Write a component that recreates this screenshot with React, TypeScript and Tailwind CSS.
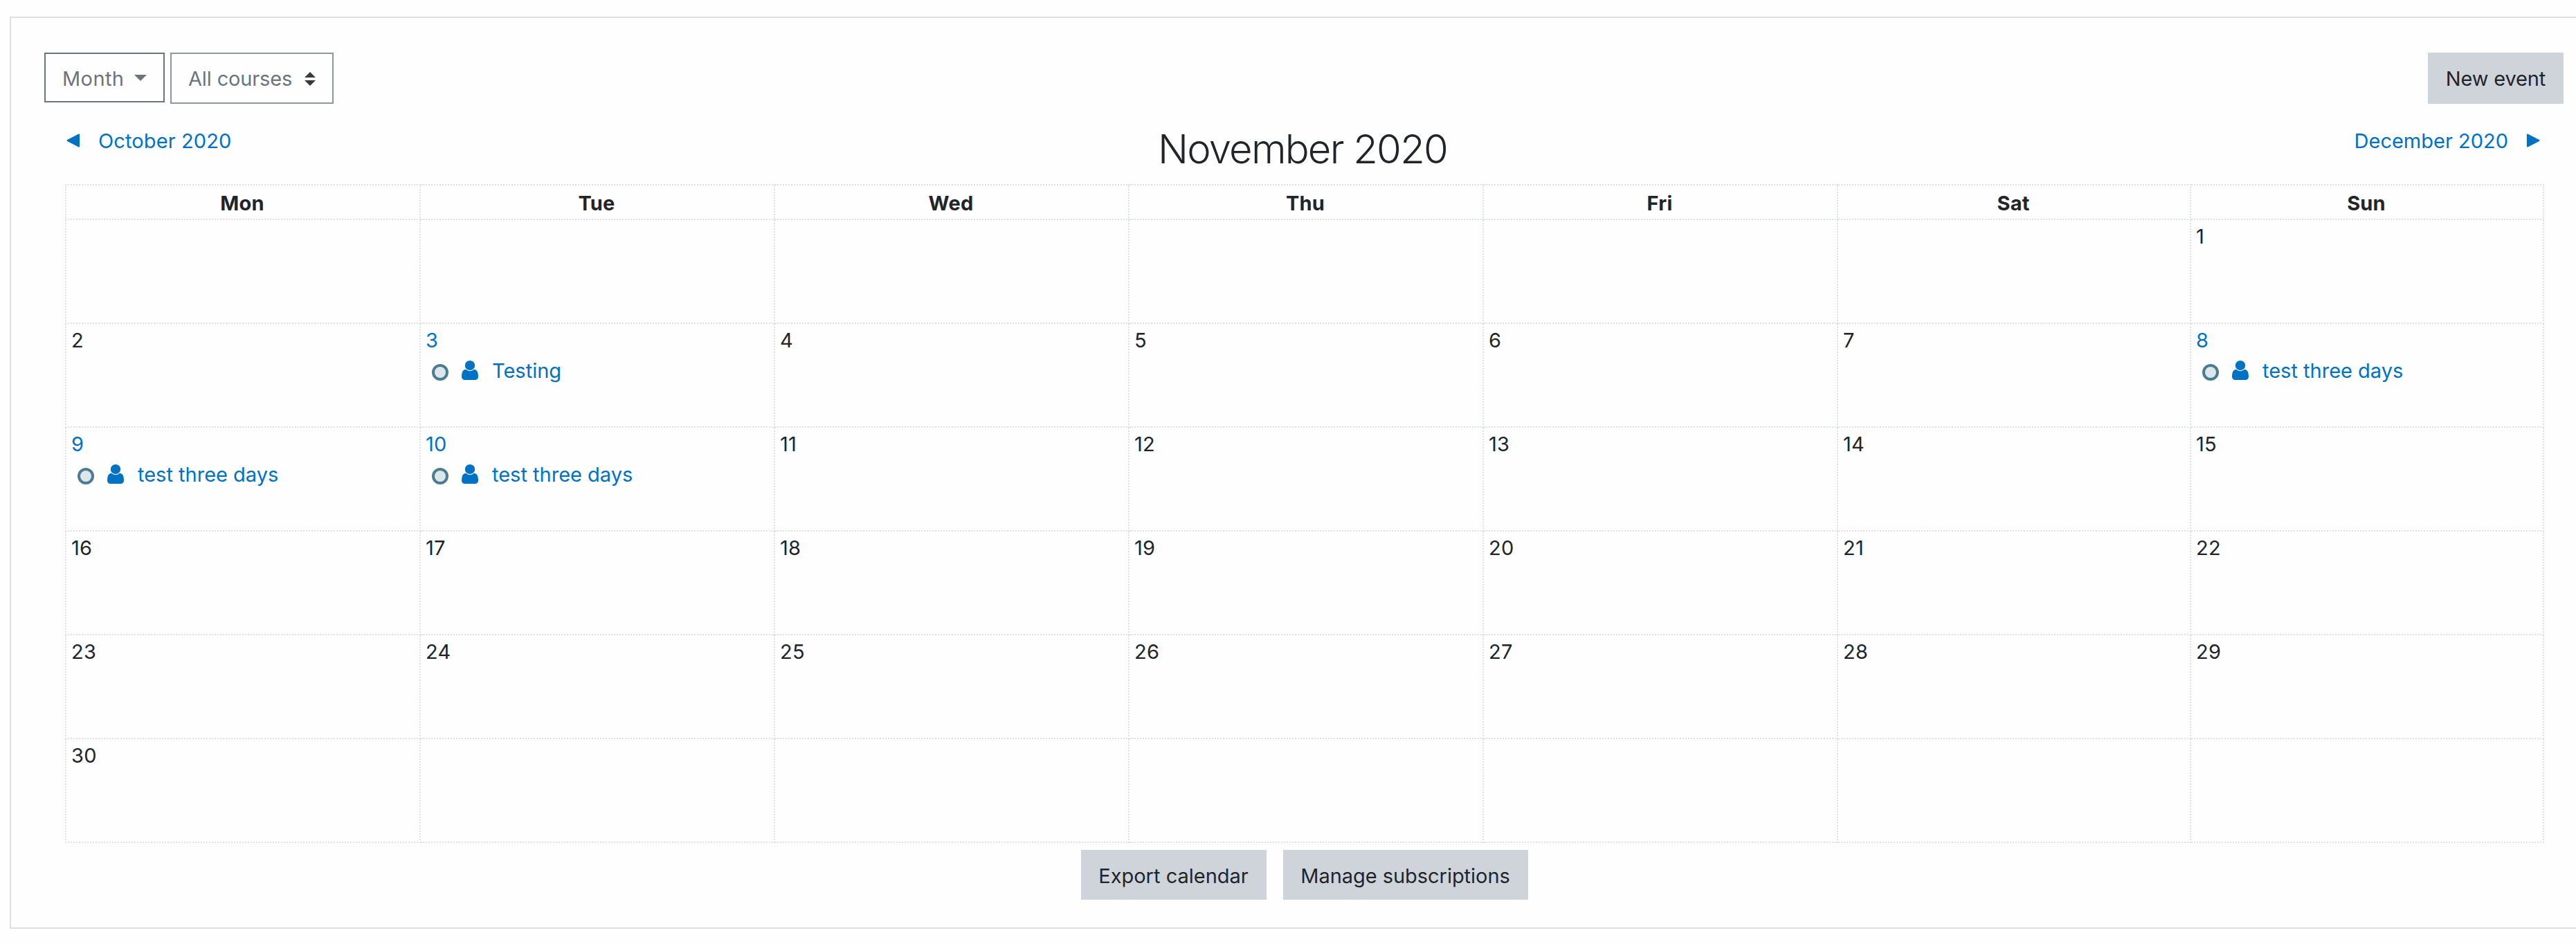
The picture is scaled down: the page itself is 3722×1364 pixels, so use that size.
type Day = { n?: number; event?: string };

const events: Record<number, string> = {
  3: "Testing",
  8: "test three days",
  9: "test three days",
  10: "test three days",
};

const weekdays = ["Mon", "Tue", "Wed", "Thu", "Fri", "Sat", "Sun"];

/* November 2020 starts on a Sunday, so the first row has six blank cells. */
const weeks: Day[][] = Array.from({ length: 6 }, (_, w) =>
  Array.from({ length: 7 }, (_, d) => {
    const n = w * 7 + d - 5;
    return n >= 1 && n <= 30 ? { n, event: events[n] } : {};
  }),
);

function UserIcon() {
  return (
    <svg className="mt-[3px] ml-[19px] h-[28px] w-[24px] shrink-0" viewBox="0 0 1280 1536" preserveAspectRatio="none" fill="currentColor">
      <path
        transform="matrix(1 0 0 -1 0 1408)"
        d="M1280 137q0 -109 -62.5 -187t-150.5 -78h-854q-88 0 -150.5 78t-62.5 187q0 85 8.5 160.5t31.5 152t58.5 131t94 89t134.5 34.5q131 -128 313 -128t313 128q76 0 134.5 -34.5t94 -89t58.5 -131t31.5 -152t8.5 -160.5zM1024 1024q0 -159 -112.5 -271.5t-271.5 -112.5t-271.5 112.5t-112.5 271.5t112.5 271.5t271.5 112.5t271.5 -112.5t112.5 -271.5z"
      />
    </svg>
  );
}

function Arrow({ className }: { className: string }) {
  return (
    <svg className={className} viewBox="0 0 20 20" fill="currentColor" stroke="currentColor" strokeWidth="2" strokeLinejoin="round">
      <path d="M1.9 1.5 V18.5 L18.4 10 Z" />
    </svg>
  );
}

function DayCell({ n, event }: Day) {
  return (
    <td className="border-2 border-dotted border-[#dee2e6] p-0 align-top">
      {n !== undefined && (
        <div className={event ? "pt-[6px] pl-[7px] text-[#0072c3]" : "pt-[6px] pl-[7px]"}>
          <div className="tracking-[0.3px]">{n}</div>
          {event && (
            <a className="mt-[9px] flex items-start pl-[9px]">
              <span className="mt-[8px] size-[24px] shrink-0 rounded-full border-4 border-[#4a7d8f] bg-[#dce7ec]" />
              <UserIcon />
              <span className="ml-[20px]">{event}</span>
            </a>
          )}
        </div>
      )}
    </td>
  );
}

export default function App() {
  return (
    <div className="h-[1364px] w-[3722px] overflow-hidden bg-[#fefefe] pt-[24px] pl-[14px] font-['Inter',sans-serif] text-[29px] leading-[35px] text-[#212529]">
      <main className="h-[1318px] border-2 border-r-0 border-[#dfdfdf] bg-[#fefefe] pt-[50px] pr-[18px] pl-[48px]">
        <div className="flex h-[74px] items-start">
          <button className="flex h-[72px] w-[174px] items-start border-2 border-[#6a757c] pt-[18px] pl-[24px] text-[#6a757c]">
            <span className="tracking-[0.4px]">Month</span>
            <svg className="mt-[12px] ml-[15px] h-[9px] w-[18px]" viewBox="0 0 18 9" fill="currentColor">
              <path d="M0 0H18L9 9Z" />
            </svg>
          </button>
          <button className="ml-[8px] flex h-[74px] w-[236px] items-start border-2 border-[#8f959e] pt-[18px] pl-[24px] text-[#6a757c]">
            <span className="tracking-[-0.14px]">All courses</span>
            <svg className="mt-[8px] ml-[18px] h-[20px] w-[16px] text-[#343a40]" viewBox="0 0 16 20" fill="currentColor">
              <path d="M0 8L8 0L16 8ZM0 12H16L8 20Z" />
            </svg>
          </button>
          <button className="ml-auto h-[74px] w-[196px] bg-[#ced4da] pt-[1px] tracking-[-0.15px]">New event</button>
        </div>

        <section className="ml-[30px] w-[3582px] pt-[30px]">
          <div className="flex h-[86px] items-start justify-between">
            <a className="flex w-[600px] items-start pt-[6px] text-[#0072c3]">
              <Arrow className="mt-[7px] ml-[2px] size-[20px] rotate-180" />
              <span className="ml-[26px] tracking-[0.11px]">October 2020</span>
            </a>
            <h2 className="pr-[6px] text-[58px] leading-[70px] font-light tracking-[-1.78px]">November 2020</h2>
            <a className="flex w-[600px] items-start justify-end pt-[6px] text-[#0072c3]">
              <span>December 2020</span>
              <Arrow className="mt-[7px] mr-[6px] ml-[26px] size-[20px]" />
            </a>
          </div>

          <table className="w-[3582px] table-fixed border-collapse">
            <colgroup>
              {weekdays.map((d, i) => (
                <col key={d} className={i < 5 ? "w-[512px]" : "w-[510px]"} />
              ))}
            </colgroup>
            <thead>
              <tr className="h-[50px]">
                {weekdays.map((d) => (
                  <th key={d} className="border-2 border-dotted border-[#dee2e6] p-0 pt-[8px] pr-[2px] align-top font-bold tracking-[0.2px]">
                    {d}
                  </th>
                ))}
              </tr>
            </thead>
            <tbody>
              {weeks.map((week, i) => (
                <tr key={i} className="h-[150px]">
                  {week.map((day, j) => (
                    <DayCell key={j} {...day} />
                  ))}
                </tr>
              ))}
            </tbody>
          </table>

          <div className="mt-[10px] flex justify-center gap-[24px]">
            <button className="h-[72px] w-[268px] bg-[#ced4da] pt-[3px] pr-[1px]">Export calendar</button>
            <button className="h-[72px] w-[354px] bg-[#ced4da] pt-[3px] pr-[1px] tracking-[-0.04px]">Manage subscriptions</button>
          </div>
        </section>
      </main>
    </div>
  );
}
